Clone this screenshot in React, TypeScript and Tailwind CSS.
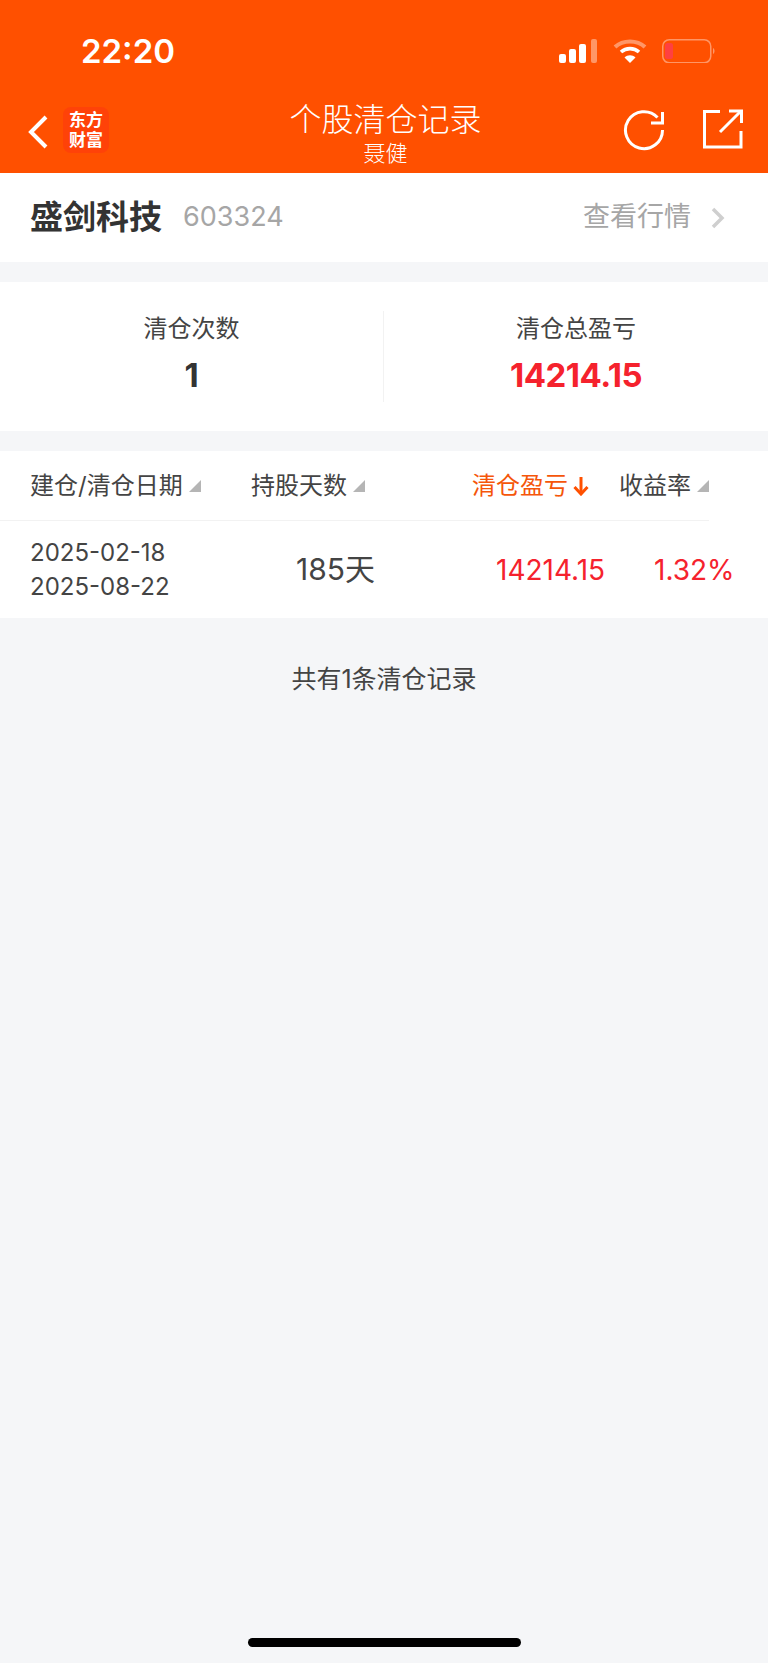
import React from "react";

const CJK = "font-['Inter','Noto_Sans_CJK_SC',sans-serif]";

function SortMark() {
  return (
    <svg width="12" height="12" viewBox="0 0 12 12" className="shrink-0">
      <polygon points="12,0 12,12 0,12" fill="#b5b5b5" />
    </svg>
  );
}

function StatusIcons() {
  return (
    <div className="flex items-center">
      <svg width="39" height="24" viewBox="0 0 39 24">
        <rect x="0" y="15" width="7" height="9" rx="2" fill="#fff" />
        <rect x="10" y="10" width="7" height="14" rx="2" fill="#fff" />
        <rect x="20" y="5" width="7" height="19" rx="2" fill="#fff" />
        <rect x="32" y="0" width="6" height="24" rx="2" fill="#fff" fillOpacity="0.4" />
      </svg>
      <svg width="34" height="24" viewBox="0 0 34 24" className="ml-[15px]" fill="none" strokeLinecap="butt">
        <path d="M2 8 C10 0.5 24 0.5 32 8" stroke="#fff" strokeOpacity="0.4" strokeWidth="4" />
        <path d="M8 13 C13 8.5 21 8.5 26 13" stroke="#fff" strokeWidth="3.6" />
        <path d="M17 24 L11.5 18.5 C14.5 15.5 19.5 15.5 22.5 18.5 Z" fill="#fff" />
      </svg>
      <svg width="54" height="24" viewBox="0 0 54 24" className="ml-[15px]">
        <rect x="0.75" y="0.75" width="48" height="23" rx="6.5" fill="none" stroke="#fff" strokeOpacity="0.4" strokeWidth="1.5" />
        <rect x="3" y="4" width="8" height="16" rx="2.5" fill="#ff4040" />
        <path d="M51 9 C53 10 53 14 51 15 Z" fill="#fff" fillOpacity="0.4" />
      </svg>
    </div>
  );
}

export default function App() {
  return (
    <div className={`relative flex min-h-[1663px] flex-col bg-[#f5f6f8] ${CJK}`}>
      {/* header */}
      <div className="h-[173px] bg-[#ff5000] text-white">
        <div className="flex h-[100px] items-start justify-between pt-[30px] pl-[81px] pr-[52px]">
          <div className="text-[33px] leading-[42px] font-semibold">22:20</div>
          <div className="pt-[9px]">
            <StatusIcons />
          </div>
        </div>
        <div className="flex h-[73px] items-start justify-between pr-[25px] pl-[28px]">
          <div className="flex w-[200px] items-start pt-[7px]">
            <svg width="20" height="34" viewBox="0 0 20 34" className="mt-[8px]" fill="none">
              <path d="M18 2 L3 17 L18 32" stroke="#fff" strokeWidth="4" />
            </svg>
            <div className="ml-[15px] flex h-[46px] w-[46px] flex-col items-center justify-center rounded-[8px] bg-[#ff4208] text-[17px] leading-[20px] font-bold">
              <span>东方</span>
              <span>财富</span>
            </div>
          </div>
          <div className="flex flex-col items-center">
            <div className="text-[32px] leading-[40px] font-light whitespace-nowrap">个股清仓记录</div>
            <div className="mt-[-1px] text-[22px] leading-[28px] font-light">聂健</div>
          </div>
          <div className="flex w-[200px] items-start justify-end pt-[9px]">
            <svg width="42" height="42" viewBox="0 0 42 42" fill="none" stroke="#fff" strokeWidth="3">
              <path d="M34.5 8.5 A18.5 18.5 0 1 0 39.5 21" />
              <path d="M39.5 3 V14 H28" />
            </svg>
            <svg width="40" height="40" viewBox="0 0 40 40" className="ml-[38px]" fill="none" stroke="#fff" strokeWidth="3">
              <path d="M17 2.5 H1.5 V38 H38 V22" />
              <path d="M17 23 L37 3" />
              <path d="M26 2 H38.5 V14" />
            </svg>
          </div>
        </div>
      </div>

      {/* stock row */}
      <div className="flex h-[89px] items-center justify-between bg-white pr-[43px] pl-[30px]">
        <div className="flex items-center">
          <span className="text-[33px] font-bold text-[#333]">盛剑科技</span>
          <span className="ml-[21px] text-[27px] text-[#a6a6a6]">603324</span>
        </div>
        <div className="flex items-center">
          <span className="text-[27px] text-[#a6a6a6]">查看行情</span>
          <svg width="14" height="22" viewBox="0 0 14 22" className="ml-[20px]" fill="none">
            <path d="M2 2 L11 11 L2 20" stroke="#cfcfcf" strokeWidth="3.5" />
          </svg>
        </div>
      </div>

      {/* stats */}
      <div className="mt-[20px] flex h-[149px] items-center bg-white">
        <div className="flex h-[91px] w-[384px] flex-col items-center border-r border-[#f2f2f2]">
          <div className="text-[24px] leading-[36px] text-[#444]">清仓次数</div>
          <div className="mt-[6px] text-[33px] leading-[44px] font-bold text-[#333]">1</div>
        </div>
        <div className="flex h-[91px] flex-1 flex-col items-center">
          <div className="text-[24px] leading-[36px] text-[#444]">清仓总盈亏</div>
          <div className="mt-[6px] text-[33px] leading-[44px] font-bold tracking-[-0.5px] text-[#f5222d]">14214.15</div>
        </div>
      </div>

      {/* table */}
      <div className="mt-[20px] bg-white">
        <div className="mr-[59px] flex h-[70px] items-center border-b border-[#f2f2f2] text-[24px] whitespace-nowrap text-[#444]">
          <div className="flex w-[263px] items-center gap-[6px] pl-[30px]">
            建仓/清仓日期
            <SortMark />
          </div>
          <div className="flex w-[233px] items-center gap-[6px]">
            持股天数
            <SortMark />
          </div>
          <div className="flex w-[155px] items-center gap-[5px] text-[#f5560a]">
            清仓盈亏
            <svg width="16" height="20" viewBox="0 0 16 20" fill="none" stroke="#ff5000" strokeWidth="3">
              <path d="M8 1 V18" />
              <path d="M1.5 11 L8 18 L14.5 11" />
            </svg>
          </div>
          <div className="flex items-center gap-[6px]">
            收益率
            <SortMark />
          </div>
        </div>
        <div className="flex h-[97px] items-center whitespace-nowrap">
          <div className="w-[263px] pl-[30px] text-[24px] leading-[34px] text-[#444]">
            <div>2025-02-18</div>
            <div>2025-08-22</div>
          </div>
          <div className="w-[233px] pl-[33px] text-[30px] text-[#444]">185天</div>
          <div className="w-[158px] text-[28px] text-[#f5222d]">14214.15</div>
          <div className="text-[28px] text-[#f5222d]">1.32%</div>
        </div>
      </div>

      <div className="mt-[43px] text-center text-[25px] leading-[36px] text-[#444]">共有1条清仓记录</div>

      {/* home indicator */}
      <div className="absolute bottom-[16px] left-[248px] h-[9px] w-[273px] rounded-full bg-black" />
    </div>
  );
}
